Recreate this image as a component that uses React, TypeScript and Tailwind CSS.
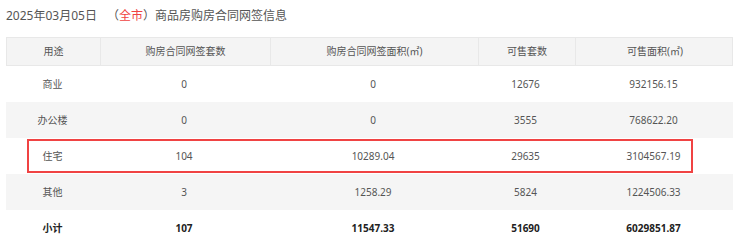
import React from "react";

const cols = "grid grid-cols-[93px_170px_208px_97px_159px]";

const rows: { name: string; v: string[]; shade?: boolean; mark?: boolean; bold?: boolean }[] = [
  { name: "商业", v: ["0", "0", "12676", "932156.15"] },
  { name: "办公楼", v: ["0", "0", "3555", "768622.20"], shade: true },
  { name: "住宅", v: ["104", "10289.04", "29635", "3104567.19"], mark: true },
  { name: "其他", v: ["3", "1258.29", "5824", "1224506.33"], shade: true },
  { name: "小计", v: ["107", "11547.33", "51690", "6029851.87"], bold: true },
];

const headers = ["用途", "购房合同网签套数", "购房合同网签面积(㎡)", "可售套数", "可售面积(㎡)"];

export default function App() {
  return (
    <div
      className="w-[740px] h-[246px] bg-white overflow-hidden pl-[6px] pt-[6px]"
      style={{ fontFamily: '"Noto Sans", "Noto Sans CJK SC", sans-serif' }}
    >
      <div className="h-[20px] leading-[20px] text-[12px] text-[#555] flex items-center whitespace-nowrap">
        <span>2025年03月05日</span>
        <span className="ml-[10px]">（</span>
        <span className="text-[#f04343]">全市</span>
        <span>）商品房购房合同网签信息</span>
      </div>
      <div className="mt-[11px] w-[727px]">
        <div className={`${cols} h-[29px] bg-[#f4f4f4] border border-[#e8e8e8] text-[10px] text-[#555]`}>
          {headers.map((h, i) => (
            <div
              key={h}
              className={`flex items-center justify-center ${i > 0 ? "border-l border-[#e8e8e8]" : ""}`}
            >
              {h}
            </div>
          ))}
        </div>
        {rows.map((r) => (
          <div
            key={r.name}
            className={`relative ${cols} h-[36px] text-[10px] ${r.shade ? "bg-[#f5f5f5]" : "bg-white"} ${
              r.bold ? "font-bold text-[#222]" : "text-[#555]"
            }`}
          >
            <div className="flex items-center justify-center">{r.name}</div>
            {r.v.map((x, i) => (
              <div key={i} className="flex items-center justify-center">
                {x}
              </div>
            ))}
            {r.mark && (
              <div className="absolute left-[21px] top-[1px] w-[666px] h-[34px] border-2 border-[#f04343] pointer-events-none" />
            )}
          </div>
        ))}
      </div>
    </div>
  );
}
